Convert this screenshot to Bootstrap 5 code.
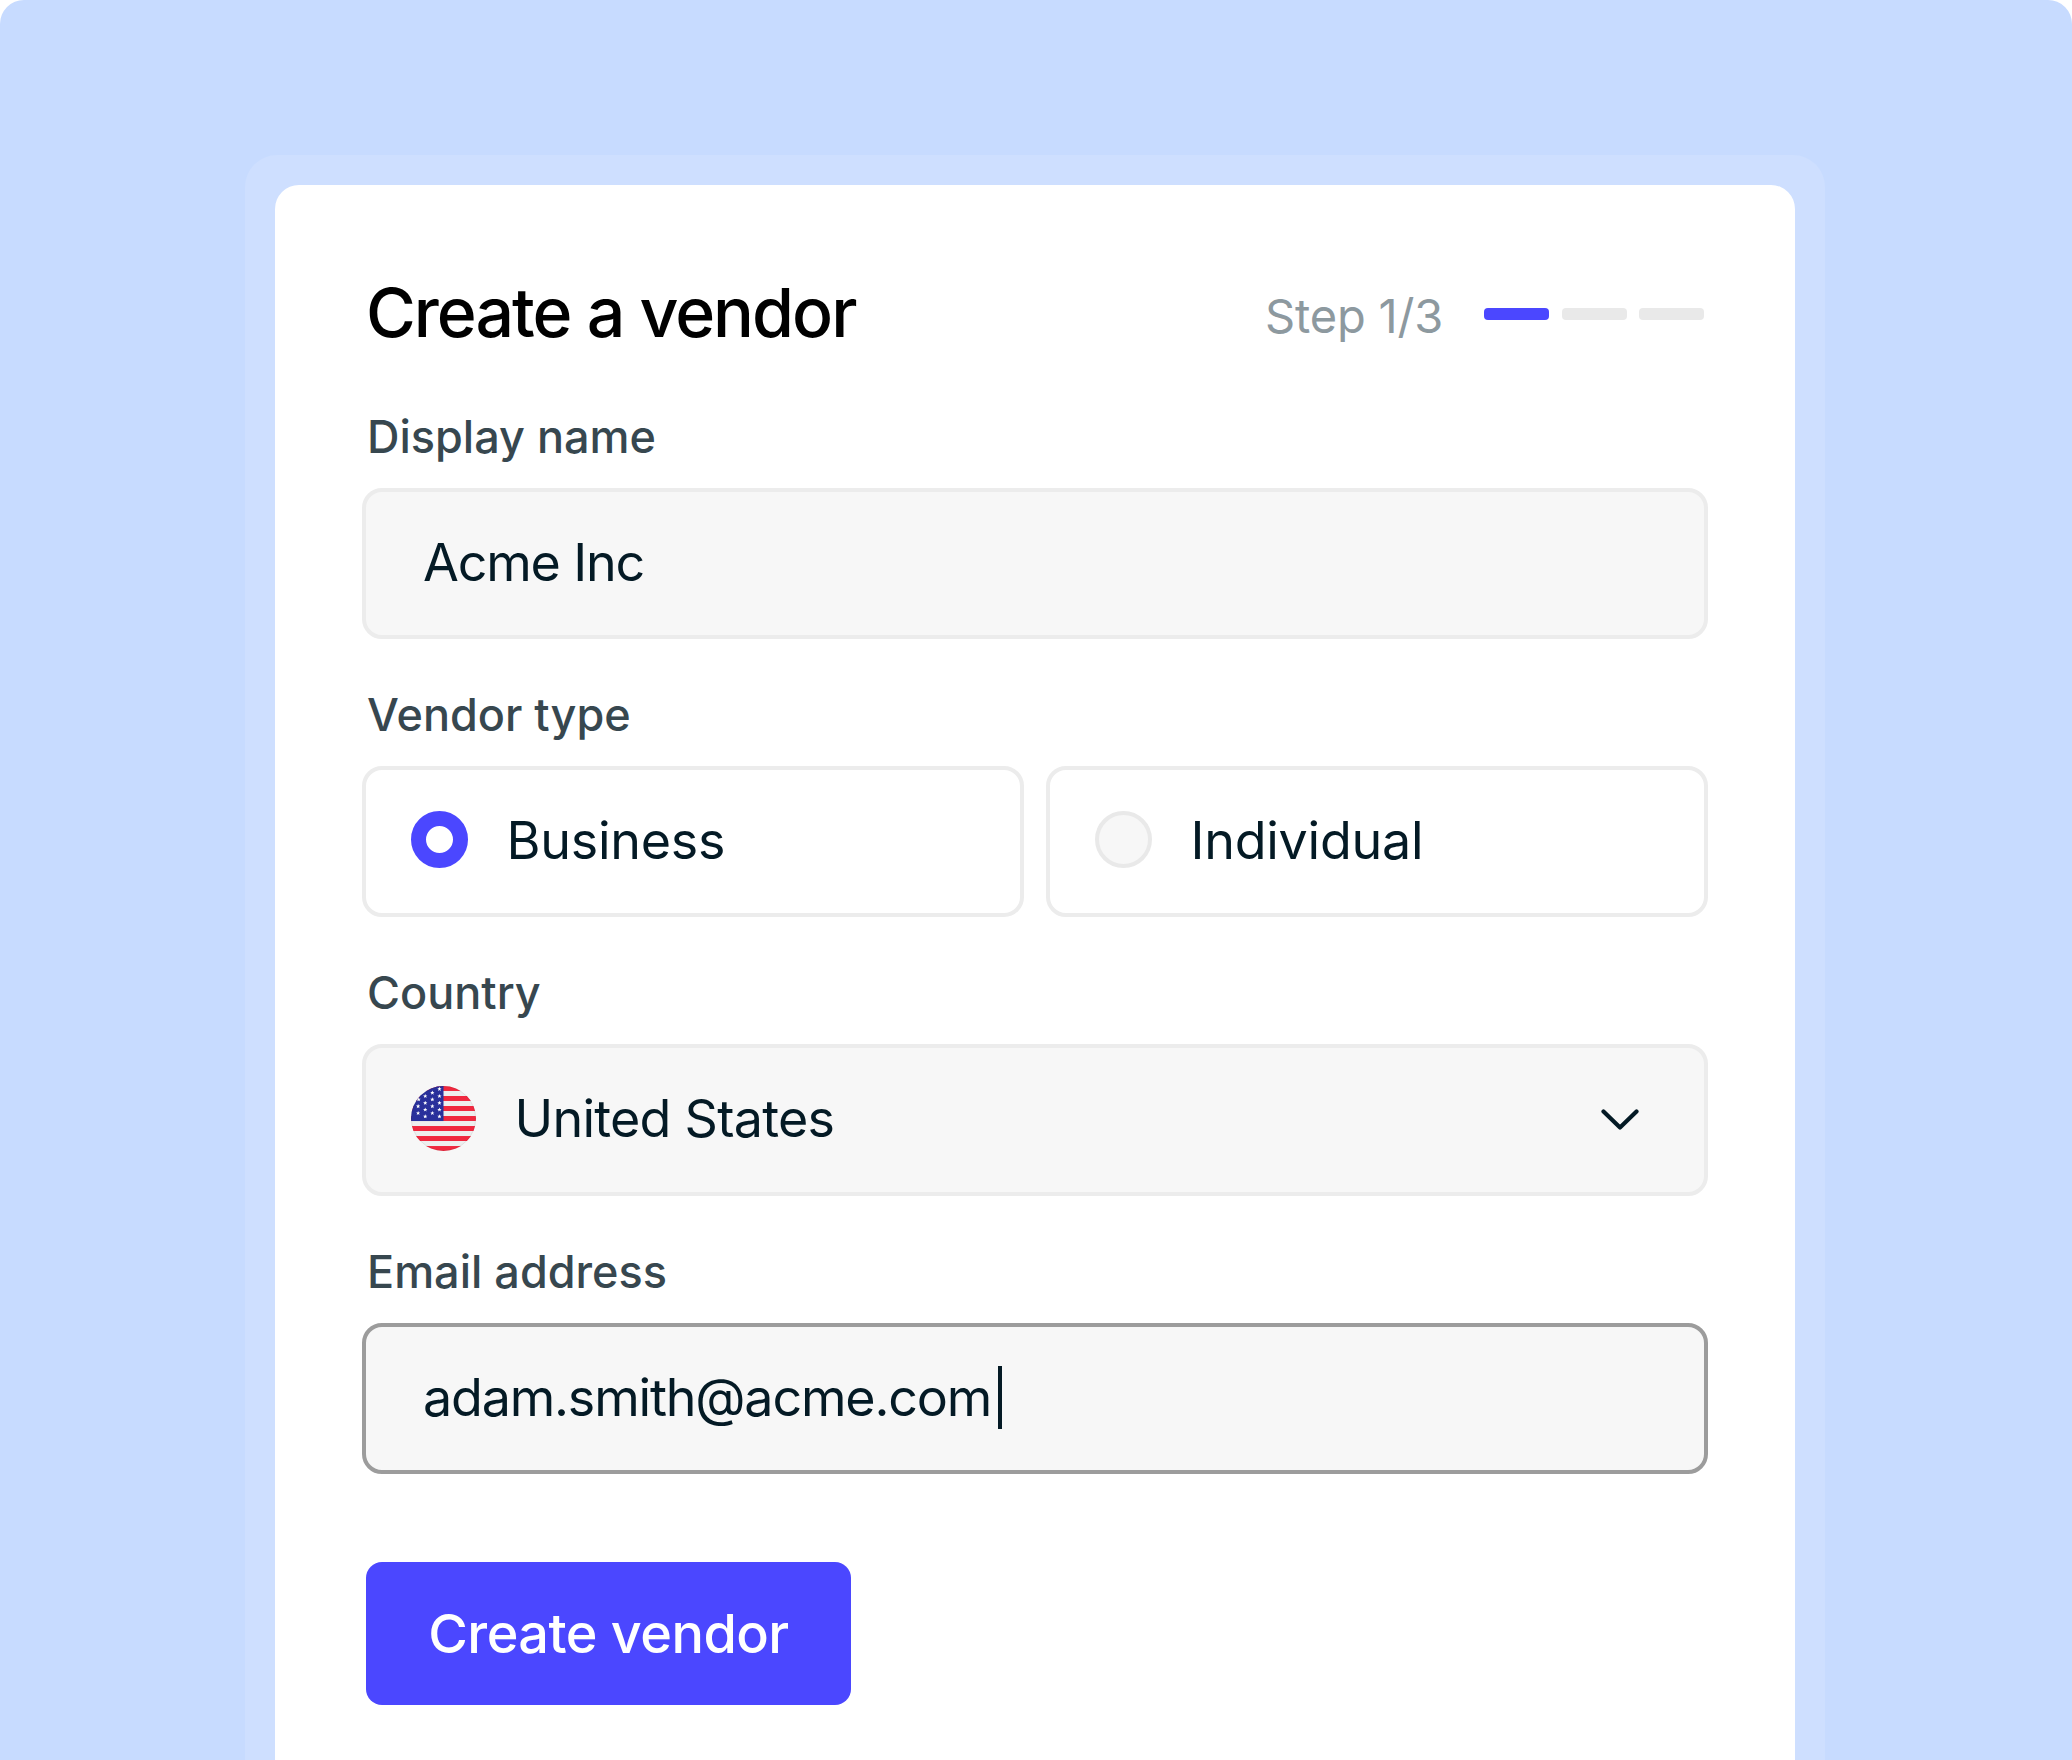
<!DOCTYPE html>
<html lang="en"><head><meta charset="utf-8"><title>Create a vendor</title>
<link href="https://cdn.jsdelivr.net/npm/bootstrap@5.3.0/dist/css/bootstrap.min.css" rel="stylesheet">
<style>
html,body{height:100%;background:#fff;overflow:hidden}
body{font-family:Inter,"Liberation Sans",sans-serif;color:#041a25}
.stage{height:1760px;background:#c7dbff;border-radius:24px 24px 0 0;padding:155px 247px 0 245px}
.shell{height:100%;background:#cedfff;border-radius:32px 32px 0 0;padding:30px 30px 0}
.sheet{height:100%;border:0;border-radius:24px 24px 0 0;background:#fff;padding:90px 91px 0 92px}
.page-title{font-size:68px;line-height:78px;font-weight:500;letter-spacing:-2px;color:#000;margin:-2px 0 2px -1px}
.step-text{font-size:47px;line-height:56px;letter-spacing:-.2px;color:#8d999f;margin:3px 41px 0 0}
.step-bars{gap:12.5px}
.step-bar{width:65px;height:12.5px;border-radius:4px;background:#e9e9e9}
.step-bar.on{background:#4b47ff}
.head-row{margin-bottom:56.6px}
.field-label{display:block;font-size:45px;line-height:54px;font-weight:500;color:#37474f;margin:0 0 24px}
.field{margin-bottom:48.9px}
.box.form-control{margin:0 -4px 0 -5px;width:auto;height:151.5px;border:4px solid #ececec;border-radius:20px;background:#f7f7f7;color:#041a25;font-size:52px;line-height:60px;letter-spacing:-.75px;padding:0 45px 2px;display:flex;align-items:center}
.box.pad-text{padding-left:57px;letter-spacing:-1.18px}
.box.name-box{padding-bottom:0}
.box.active-box{border-color:#9c9c9c}
.type-row{margin:0 -4px 0 -5px;gap:22px}
.type-option{flex:1 1 0;height:151.5px;border:4px solid #ececec;border-radius:20px;background:#fff;font-size:52px;line-height:60px;letter-spacing:-.25px;padding:0 45px 2px;gap:38.5px;margin:0;cursor:pointer}
.type-option .form-check-input{width:57px;height:57px;margin:0 0 2px;flex:none;border:4px solid #e9e9e9;background:#f7f7f7;background-image:none}
.type-option .form-check-input:checked{border:15px solid #4b47ff;background:#fff;background-image:none}
.flag-icon{width:65px;height:65px;flex:none;margin:0 38.5px 2px 0}
.chevron{width:38px;height:21px;flex:none;margin-right:19.6px}
.text-caret{width:4px;height:63px;background:#041a25;margin-left:7px;flex:none}
.submit-btn.btn{margin:87.6px 0 0 -1px;width:485px;height:143.5px;padding:0;background:#4b47ff;border:0;border-radius:16px;color:#fff;font-size:54px;line-height:64px;letter-spacing:-.54px;font-weight:500}
</style></head>
<body>
<div class="stage"><div class="shell"><div class="card sheet">
  <div class="d-flex align-items-center justify-content-between head-row">
    <h1 class="page-title">Create a vendor</h1>
    <div class="d-flex align-items-center">
      <span class="step-text">Step 1/3</span>
      <div class="d-flex step-bars"><span class="step-bar on"></span><span class="step-bar"></span><span class="step-bar"></span></div>
    </div>
  </div>
  <form>
    <div class="field"><label class="field-label">Display name</label><div class="form-control box pad-text name-box">Acme Inc</div></div>
    <div class="field"><div class="field-label">Vendor type</div>
      <div class="d-flex type-row">
        <label class="d-flex align-items-center type-option"><input class="form-check-input" type="radio" name="vt" checked>Business</label>
        <label class="d-flex align-items-center type-option"><input class="form-check-input" type="radio" name="vt">Individual</label>
      </div>
    </div>
    <div class="field"><label class="field-label">Country</label>
      <div class="form-control box">
        <svg class="flag-icon" viewBox="0 0 64 64" aria-hidden="true"><defs><clipPath id="fc"><circle cx="32" cy="32" r="32"/></clipPath><polygon id="st" points="0,-2.2 .6,-.7 2.1,-.7 .9,.25 1.35,1.8 0,.9 -1.35,1.8 -.9,.25 -2.1,-.7 -.6,-.7" fill="#fff"/></defs>
          <g clip-path="url(#fc)"><rect width="64" height="64" fill="#eeeeee"/>
          <g fill="#f0283f"><rect y="0" width="64" height="4.9"/><rect y="9.85" width="64" height="4.9"/><rect y="19.7" width="64" height="4.9"/><rect y="29.55" width="64" height="4.9"/><rect y="39.4" width="64" height="4.9"/><rect y="49.25" width="64" height="4.9"/><rect y="59.1" width="64" height="4.9"/></g>
          <rect width="32" height="34.5" fill="#29309b"/>
          <use href="#st" x="28" y="3"/>
          <use href="#st" x="21" y="6.7"/>
          <use href="#st" x="14" y="10"/><use href="#st" x="28" y="10"/>
          <use href="#st" x="7.5" y="13.3"/><use href="#st" x="21" y="13.3"/>
          <use href="#st" x="14" y="16.7"/><use href="#st" x="28" y="16.7"/>
          <use href="#st" x="7" y="20"/><use href="#st" x="21" y="20"/>
          <use href="#st" x="14" y="23.3"/><use href="#st" x="28" y="23.3"/>
          <use href="#st" x="7" y="26.7"/><use href="#st" x="21" y="26.7"/>
          <use href="#st" x="14" y="30"/><use href="#st" x="28" y="30"/></g>
          <circle cx="32" cy="32" r="31.6" fill="none" stroke="#000" stroke-opacity=".08" stroke-width=".8"/></svg>
        <span class="flex-grow-1">United States</span>
        <svg class="chevron" viewBox="0 0 38 21" aria-hidden="true"><path d="M2.5 2.5 19 18.5 35.5 2.5" fill="none" stroke="#041a25" stroke-width="4.2" stroke-linecap="round" stroke-linejoin="round"/></svg>
      </div>
    </div>
    <div class="field mb-0"><label class="field-label">Email address</label><div class="form-control box pad-text active-box">adam.smith@acme.com<span class="text-caret"></span></div></div>
    <button type="button" class="btn submit-btn d-block">Create vendor</button>
  </form>
</div></div></div>
<script src="https://cdn.jsdelivr.net/npm/bootstrap@5.3.0/dist/js/bootstrap.bundle.min.js"></script>
</body></html>
